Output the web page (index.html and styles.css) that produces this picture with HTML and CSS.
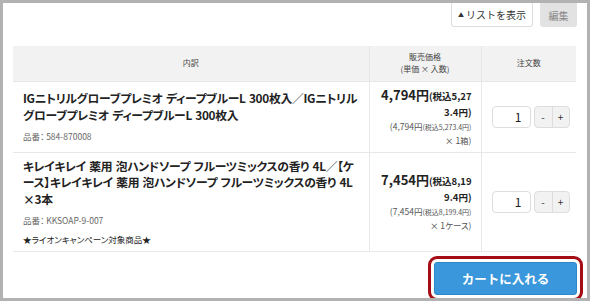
FILE: index.html
```html
<html lang="ja">
<head>
    <meta charset="UTF-8">
    <meta name="viewport" content="width=device-width, initial-scale=1.0">
    <title>カート</title>
    <link rel="stylesheet" href="styles.css">
</head>
<body>
    <div class="frame">
        <div class="toolbar">
            <button class="btn-list"><span class="tri">▲</span>リストを表示</button>
            <button class="btn-edit">編集</button>
        </div>

        <table class="cart">
            <thead>
                <tr>
                    <th class="col-name">内訳</th>
                    <th class="col-price">販売価格<br>(単価 × 入数)</th>
                    <th class="col-qty">注文数</th>
                </tr>
            </thead>
            <tbody>
                <tr>
                    <td class="name">
                        <p class="title">IGニトリルグローブプレミオ ディープブルーL 300枚入／IGニトリル<br>グローブプレミオ ディープブルーL 300枚入</p>
                        <p class="code">品番： 584-870008</p>
                    </td>
                    <td class="price">
                        <p class="main">4,794円<small>(税込5,273.4円)</small></p>
                        <p class="sub">(4,794円<small>(税込5,273.4円)</small><br>× 1箱)</p>
                    </td>
                    <td class="qty">
                        <div class="qty-box">
                            <input type="text" value="1">
                            <div class="step"><span>-</span><span>+</span></div>
                        </div>
                    </td>
                </tr>
                <tr>
                    <td class="name">
                        <p class="title">キレイキレイ 薬用 泡ハンドソープ フルーツミックスの香り 4L／【ケ<br>ース】キレイキレイ 薬用 泡ハンドソープ フルーツミックスの香り 4L<br>×3本</p>
                        <p class="code">品番： KKSOAP-9-007</p>
                        <p class="note">★ライオンキャンペーン対象商品★</p>
                    </td>
                    <td class="price">
                        <p class="main">7,454円<small>(税込8,199.4円)</small></p>
                        <p class="sub">(7,454円<small>(税込8,199.4円)</small><br>× 1ケース)</p>
                    </td>
                    <td class="qty">
                        <div class="qty-box">
                            <input type="text" value="1">
                            <div class="step"><span>-</span><span>+</span></div>
                        </div>
                    </td>
                </tr>
            </tbody>
        </table>

        <div class="footer">
            <button class="btn-cart">カートに入れる</button>
        </div>
    </div>
</body>
</html>
```

FILE: styles.css
```css
* {
    margin: 0;
    padding: 0;
    box-sizing: border-box;
}

body {
    font-family: "Noto Sans CJK JP", "Noto Sans", sans-serif;
    color: #222;
    background: #fff;
}

.frame {
    width: 590px;
    height: 301px;
    border: 3px solid #b2b2b2;
    padding: 0 10px;
    overflow: hidden;
}

/* 上のボタン */
.toolbar {
    display: flex;
    justify-content: flex-end;
    gap: 7px;
    height: 24px;
}

.toolbar button {
    font-family: inherit;
    font-size: 10px;
    height: 24px;
    border-radius: 0 0 3px 3px;
    cursor: pointer;
}

.btn-list {
    width: 82px;
    background: #fff;
    border: 1px solid #ddd;
    border-top: none;
    color: #333;
}

.btn-list .tri {
    font-size: 6px;
    vertical-align: 2px;
    margin-right: 2px;
}

.btn-edit {
    width: 37px;
    background: #e2e2e2;
    border: none;
    color: #888;
}

/* 明細テーブル */
.cart {
    width: 563px;
    margin-top: 19px;
    border-collapse: collapse;
    table-layout: fixed;
    font-feature-settings: "palt";
}

.cart th {
    background: #f2f2f2;
    font-size: 8px;
    font-weight: normal;
    color: #444;
    line-height: 12px;
    height: 35px;
    border-bottom: 1px solid #e6e6e6;
    border-left: 1px solid #e6e6e6;
}

.cart th:first-child {
    border-left: none;
}

.col-name {
    width: 356px;
}

.col-price {
    width: 112px;
}

.col-qty {
    width: 95px;
}

.cart td {
    vertical-align: middle;
    padding: 5px 10px;
    border-bottom: 1px solid #e8e8e8;
    border-left: 1px solid #e8e8e8;
}

.cart td:first-child {
    border-left: none;
}

.cart td.name {
    padding-right: 6px;
}

.title {
    font-size: 11.8px;
    font-weight: bold;
    letter-spacing: -0.3px;
    word-spacing: 1px;
    line-height: 16.5px;
    color: #222;
}

.code {
    font-size: 8.5px;
    color: #666;
    line-height: 14px;
    margin-top: 6px;
}

.note {
    font-size: 8.5px;
    line-height: 14px;
    margin-top: 5px;
}

.cart td.price {
    text-align: right;
    padding-right: 9px;
}

.price .main {
    font-size: 13px;
    font-weight: bold;
    line-height: 16px;
    word-break: break-all;
}

.price .main small {
    font-size: 9.5px;
}

.price .sub {
    font-size: 8.5px;
    color: #555;
    line-height: 13px;
}

.price .sub small {
    font-size: 7px;
}

.qty-box {
    display: flex;
    gap: 3px;
}

.qty-box input {
    width: 39px;
    height: 22px;
    border: 1px solid #ddd;
    border-radius: 4px;
    text-align: right;
    padding-right: 8px;
    font-family: inherit;
    font-size: 12px;
    color: #222;
}

.step {
    display: flex;
    border: 1px solid #ddd;
    border-radius: 4px;
    background: #f2f2f2;
    height: 22px;
}

.step span {
    width: 17px;
    text-align: center;
    line-height: 20px;
    font-size: 10px;
    color: #333;
}

.step span + span {
    border-left: 1px solid #ddd;
}

/* カートボタン */
.footer {
    display: flex;
    justify-content: flex-end;
    padding-top: 10px;
}

.btn-cart {
    width: 143px;
    height: 33px;
    background: #3a97db;
    border: 1px solid #2f86c6;
    border-radius: 3px;
    color: #fff;
    font-family: inherit;
    font-size: 12.5px;
    font-weight: bold;
    outline: 3px solid #a50d16;
    outline-offset: 3px;
    cursor: pointer;
}
```
